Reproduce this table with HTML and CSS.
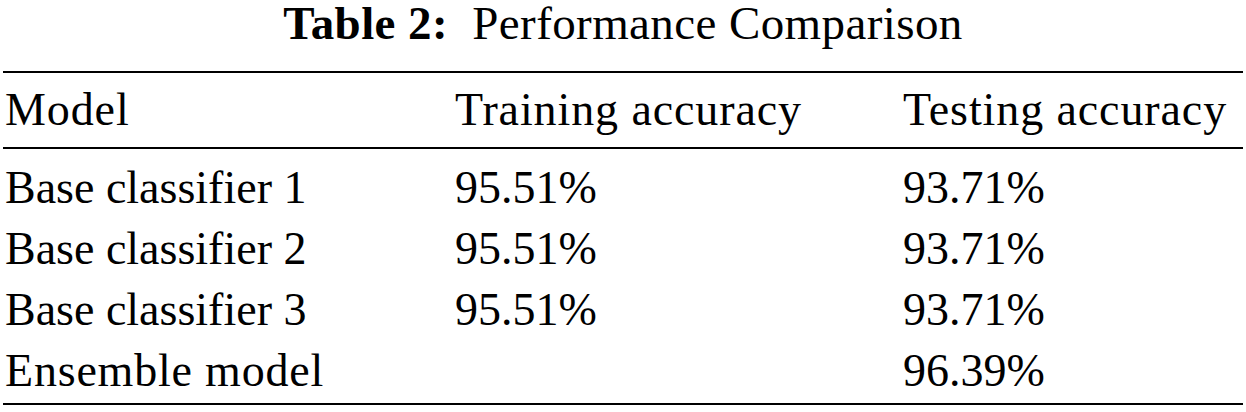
FILE: index.html
```html
<!DOCTYPE html>
<html lang="en">
<head>
    <meta charset="UTF-8">
    <meta name="viewport" content="width=device-width, initial-scale=1.0">
    <title>Performance Comparison</title>
    <link rel="stylesheet" href="styles.css">
</head>
<body>
    <div class="container">
        <div class="caption"><b>Table 2:</b>&nbsp; Performance Comparison</div>

        <table class="results">
            <colgroup>
                <col class="col-model">
                <col class="col-train">
                <col class="col-test">
            </colgroup>
            <thead>
                <tr>
                    <th>Model</th>
                    <th>Training accuracy</th>
                    <th>Testing accuracy</th>
                </tr>
            </thead>
            <tbody>
                <tr>
                    <td>Base classifier 1</td>
                    <td>95.51%</td>
                    <td>93.71%</td>
                </tr>
                <tr>
                    <td>Base classifier 2</td>
                    <td>95.51%</td>
                    <td>93.71%</td>
                </tr>
                <tr>
                    <td>Base classifier 3</td>
                    <td>95.51%</td>
                    <td>93.71%</td>
                </tr>
                <tr>
                    <td class="wide">Ensemble model</td>
                    <td></td>
                    <td>96.39%</td>
                </tr>
            </tbody>
        </table>
    </div>
</body>
</html>
```

FILE: styles.css
```css
body {
    font-family: "Liberation Serif", "Times New Roman", serif;
    margin: 0;
    background: white;
    color: black;
}
.container {
    width: 1240px;
    padding: 0 3px;
}
.caption {
    text-align: center;
    font-size: 47px;
    line-height: 46px;
    letter-spacing: 0.4px;
    margin-bottom: 25px;
}
.caption b {
    font-weight: bold;
}
.results {
    width: 1240px;
    table-layout: fixed;
    border-collapse: separate;
    border-spacing: 0;
    border-top: 2px solid black;
    border-bottom: 2px solid black;
    font-size: 46px;
}
.col-model {
    width: 450px;
}
.col-train {
    width: 448px;
}
.col-test {
    width: 342px;
}
th, td {
    padding: 0 0 0 2px;
    text-align: left;
    font-weight: normal;
    line-height: 61px;
    white-space: nowrap;
}
thead th {
    padding-top: 6px;
    padding-bottom: 7px;
    letter-spacing: 0.9px;
    border-bottom: 2px solid black;
}
td.wide {
    letter-spacing: 0.8px;
}
tbody tr:first-child td {
    padding-top: 8px;
}
tbody tr:last-child td {
    padding-bottom: 2px;
}
```
